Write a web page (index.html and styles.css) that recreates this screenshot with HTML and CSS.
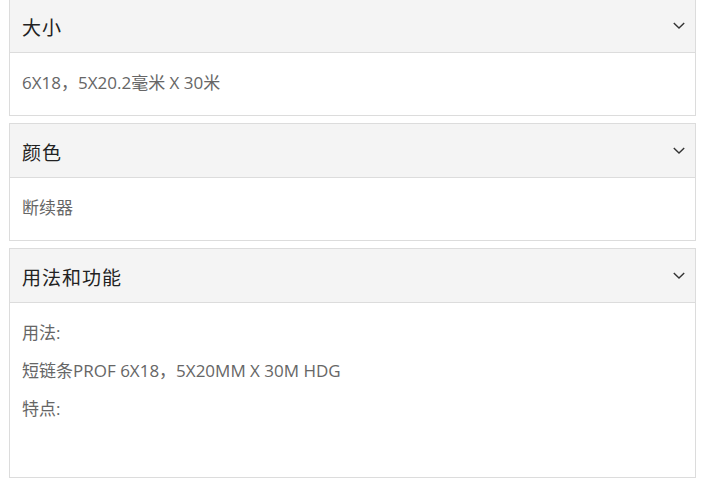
FILE: index.html
```html
<!DOCTYPE html>
<html lang="zh">
<head>
<meta charset="utf-8">
<link rel="stylesheet" href="styles.css">
</head>
<body>
<div class="accordion">
  <section class="panel">
    <div class="panel-head">
      <span class="title">大小</span>
      <svg class="chev" width="12" height="7" viewBox="0 0 12 7"><path d="M0.8 1 L6 6 L11.2 1" fill="none" stroke="#333" stroke-width="1.4"/></svg>
    </div>
    <div class="panel-body"><p>6X18，5X20.2毫米 X 30米</p></div>
  </section>
  <section class="panel">
    <div class="panel-head">
      <span class="title">颜色</span>
      <svg class="chev" width="12" height="7" viewBox="0 0 12 7"><path d="M0.8 1 L6 6 L11.2 1" fill="none" stroke="#333" stroke-width="1.4"/></svg>
    </div>
    <div class="panel-body"><p>断续器</p></div>
  </section>
  <section class="panel">
    <div class="panel-head">
      <span class="title">用法和功能</span>
      <svg class="chev" width="12" height="7" viewBox="0 0 12 7"><path d="M0.8 1 L6 6 L11.2 1" fill="none" stroke="#333" stroke-width="1.4"/></svg>
    </div>
    <div class="panel-body tall">
      <p>用法:</p>
      <p>短链条PROF 6X18，5X20MM X 30M HDG</p>
      <p>特点:</p>
    </div>
  </section>
</div>
</body>
</html>
```
FILE: styles.css
```css
html, body { margin: 0; padding: 0; background: #fff; }
body {
  font-family: "Open Sans", "Noto Sans CJK SC", sans-serif;
  color: #333;
}
.accordion {
  padding: 0 12px 0 9px;
  margin-top: -2px;
  display: flex;
  flex-direction: column;
  gap: 7px;
}
.panel {
  border: 1px solid #dcdcdc;
  background: #fff;
}
.panel-head {
  height: 54px;
  background: #f4f4f4;
  border-bottom: 1px solid #dcdcdc;
  display: flex;
  align-items: center;
  justify-content: space-between;
  padding: 0 10px 0 12px;
  box-sizing: border-box;
}
.title {
  font-size: 19px;
  letter-spacing: 1px;
  color: #222;
  padding-top: 3px;
}
.chev { display: block; }
.panel-body {
  padding: 18px 12px 20px;
  font-size: 17px;
  color: #666;
}
.panel-body p {
  margin: 0;
  line-height: 24px;
}
.panel-body.tall {
  min-height: 136px;
}
.panel-body.tall p + p { margin-top: 14px; }
```
